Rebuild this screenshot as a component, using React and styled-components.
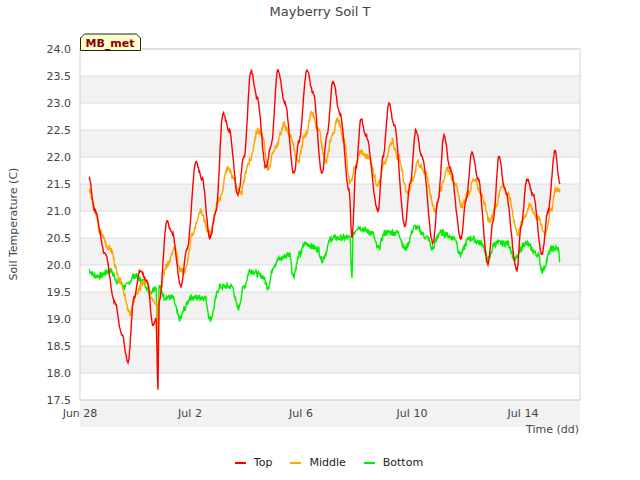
import styled, { createGlobalStyle } from "styled-components";

const Global = createGlobalStyle`
  body { margin: 0; background: #fff; font-family: "DejaVu Sans", sans-serif; }
`;

const Page = styled.div`
  width: 640px;
  height: 480px;
  display: flex;
  flex-direction: column;
  color: #444;
`;

const Title = styled.div`
  height: 24px;
  line-height: 24px;
  text-align: center;
  font-size: 13px;
`;

const Legend = styled.div`
  display: flex;
  justify-content: center;
  gap: 18px;
  font-size: 11px;
  color: #222;
  margin-top: 12px;
  padding-left: 18px;
`;

const Item = styled.div`
  display: flex;
  align-items: center;
  gap: 8px;
`;

const Swatch = styled.span`
  width: 11px;
  height: 2px;
  background: ${(p) => p.color};
`;

const top = [[89,21.6],[95,21.0],[105,20.2],[115,19.3],[122,18.7],[128,18.2],[134,19.4],[140,19.9],[147,19.7],[153,18.9],[156,19.0],[158,17.7],[159,19.3],[167,20.8],[172,20.6],[181,19.6],[187,20.3],[196,21.9],[202,21.6],[210,20.5],[216,21.0],[223,22.8],[229,22.5],[238,21.3],[244,22.0],[251,23.6],[257,23.1],[266,21.8],[271,22.2],[278,23.6],[285,23.0],[294,21.7],[299,22.3],[307,23.6],[313,23.2],[322,21.7],[327,22.4],[333,23.4],[340,22.8],[349,21.4],[352,20.5],[356,21.8],[361,22.7],[366,22.4],[378,21.0],[383,22.0],[389,23.0],[394,22.6],[405,20.7],[410,21.5],[416,22.5],[422,22.0],[433,20.4],[438,21.2],[444,22.4],[450,21.8],[461,20.5],[466,21.2],[472,22.1],[478,21.6],[488,20.0],[493,20.8],[499,22.0],[505,21.4],[517,19.9],[521,20.7],[527,21.6],[533,21.3],[542,20.2],[548,21.0],[555,22.1],[560,21.5]];
const mid = [[89,21.4],[95,21.0],[100,20.6],[110,20.3],[120,19.7],[130,19.1],[137,19.5],[145,19.7],[152,19.4],[157,19.3],[158,18.2],[159,19.5],[167,20.0],[175,20.3],[180,19.9],[185,19.9],[193,20.6],[200,21.0],[210,20.6],[219,21.2],[228,21.8],[234,21.6],[240,21.3],[249,21.9],[258,22.5],[262,22.4],[268,21.8],[276,22.2],[284,22.6],[290,22.4],[298,21.9],[305,22.4],[312,22.8],[318,22.5],[326,21.9],[332,22.4],[338,22.7],[344,22.3],[350,21.5],[355,21.8],[360,22.1],[368,22.0],[378,21.5],[385,21.9],[392,22.3],[398,22.0],[408,21.3],[413,21.6],[418,21.9],[425,21.7],[435,21.0],[441,21.4],[447,21.8],[453,21.6],[462,21.1],[468,21.3],[474,21.6],[481,21.3],[490,20.8],[496,21.1],[502,21.5],[508,21.3],[518,20.6],[524,20.9],[530,21.1],[537,20.9],[545,20.6],[551,21.0],[556,21.4],[560,21.4]];
const bot = [[89,19.9],[95,19.8],[100,19.8],[110,19.9],[118,19.7],[125,19.6],[135,19.8],[143,19.7],[150,19.5],[156,19.6],[158,18.4],[159,19.6],[165,19.4],[172,19.4],[180,19.0],[185,19.2],[190,19.4],[198,19.4],[205,19.4],[210,19.0],[220,19.6],[226,19.6],[232,19.6],[238,19.2],[244,19.6],[250,19.9],[262,19.8],[268,19.6],[274,20.0],[278,20.1],[290,20.2],[293,19.8],[300,20.2],[305,20.4],[318,20.3],[322,20.1],[332,20.5],[345,20.5],[350,20.5],[352,19.7],[353,20.6],[358,20.7],[372,20.6],[378,20.3],[385,20.6],[398,20.6],[405,20.3],[415,20.7],[428,20.5],[432,20.3],[440,20.6],[455,20.5],[460,20.2],[470,20.5],[482,20.4],[488,20.1],[495,20.4],[508,20.4],[515,20.1],[525,20.4],[538,20.2],[542,19.9],[552,20.3],[558,20.3],[560,20.1]];

const yOf = (v) => 25 + (24 - v) * 54;

function build(pts, seed, amp) {
  let s = seed;
  const rnd = () => { s = (s * 9301 + 49297) % 233280; return s / 233280 - 0.5; };
  const out = [];
  for (let i = 0; i < pts.length - 1; i++) {
    const [x0, v0] = pts[i];
    const [x1, v1] = pts[i + 1];
    const n = Math.max(1, Math.round((x1 - x0) * 2));
    for (let k = 0; k < n; k++) {
      const t = k / n;
      const c = (1 - Math.cos(Math.PI * t)) / 2;
      const v = v0 + (v1 - v0) * c + rnd() * amp;
      out.push(`${(x0 + (x1 - x0) * t).toFixed(1)},${yOf(v).toFixed(1)}`);
    }
  }
  const last = pts[pts.length - 1];
  out.push(`${last[0]},${yOf(last[1]).toFixed(1)}`);
  return out.join(" ");
}

const ticks = [24, 23.5, 23, 22.5, 22, 21.5, 21, 20.5, 20, 19.5, 19, 18.5, 18, 17.5];
const xt = [[80, "Jun 28"], [190, "Jul 2"], [301, "Jul 6"], [412, "Jul 10"], [523, "Jul 14"]];

const Chart = () => (
  <svg width="640" height="420" style={{ display: "block" }} fontFamily="DejaVu Sans, sans-serif" fontSize="11">
    {ticks.slice(0, -1).map((t, i) =>
      i % 2 === 0 ? <rect key={t} x="80" y={yOf(t) + 27} width="500" height="27" fill="#f2f2f2" /> : null
    )}
    {ticks.map((t) => (
      <g key={t}>
        <line x1="80" x2="580" y1={yOf(t)} y2={yOf(t)} stroke="#dcdcdc" />
        <text x="71" y={yOf(t) + 4} textAnchor="end" fill="#444">{t.toFixed(1)}</text>
      </g>
    ))}
    <rect x="80" y="25" width="500" height="351" fill="none" stroke="#d4d4d4" />
    {xt.map(([x, l]) => (
      <text key={l} x={x} y="393" textAnchor="middle" fill="#444">{l}</text>
    ))}
    <text x="579" y="409" textAnchor="end" fill="#444">Time (dd)</text>
    <text transform="translate(17,200) rotate(-90)" textAnchor="middle" fill="#444">Soil Temperature (C)</text>
    <polyline points={build(bot, 7, 0.12)} fill="none" stroke="#00ee00" strokeWidth="1.4" />
    <polyline points={build(mid, 3, 0.12)} fill="none" stroke="#ffa500" strokeWidth="1.4" />
    <polyline points={build(top, 5, 0.06)} fill="none" stroke="#ff0000" strokeWidth="1.4" />
    <path d="M80.5,26.5 V14 l4,-4 h52 l4,4 V26.5 Z" fill="#ffffcc" stroke="#222" />
    <text x="110" y="23" textAnchor="middle" fill="#8b0000" fontWeight="bold" fontSize="11">MB_met</text>
  </svg>
);

export default function App() {
  return (
    <Page>
      <Global />
      <Title>Mayberry Soil T</Title>
      <Chart />
      <Legend>
        <Item><Swatch color="#ff0000" />Top</Item>
        <Item><Swatch color="#ffa500" />Middle</Item>
        <Item><Swatch color="#00ee00" />Bottom</Item>
      </Legend>
    </Page>
  );
}
